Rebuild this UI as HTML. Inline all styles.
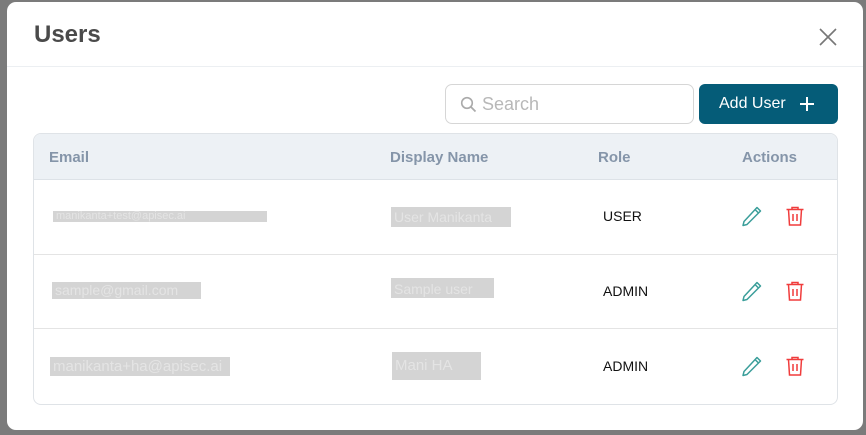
<!DOCTYPE html>
<html><head><style>
*{box-sizing:border-box;margin:0;padding:0}
body{width:866px;height:435px;background:#7b7b7b;font-family:"Liberation Sans",sans-serif;position:relative;overflow:hidden}
.m{position:absolute;left:7px;top:2px;width:856px;height:428px;background:#fff;border-radius:9px}
.t{position:absolute;left:34px;top:21px;font-size:24px;font-weight:bold;color:#4a4a4a}
.hd{position:absolute;left:7px;top:66px;width:856px;height:1px;background:#eceff2}
.s{position:absolute;left:445px;top:84px;width:249px;height:40px;border:1px solid #d6d6d6;border-radius:7px}
.s span{position:absolute;left:36px;top:9px;font-size:18px;color:#b8b8b8}
.b{position:absolute;left:699px;top:84px;width:139px;height:40px;background:#055c78;border-radius:6px;color:#fff;font-size:16px}
.b span{position:absolute;left:20px;top:11px}
.tb{position:absolute;left:33px;top:133px;width:805px;height:272px;border:1px solid #dfe3e7;border-radius:8px;overflow:hidden}
.th{position:absolute;left:0;top:0;width:805px;height:46px;background:#edf1f5;border-bottom:1px solid #dde2e7}
.th span{position:absolute;top:15px;font-size:15px;font-weight:bold;color:#8595a9}
.rl{position:absolute;left:0;width:805px;height:1px;background:#e4e4e4}
.r{position:absolute;background:#d4d4d4;color:#e4e4e4;font-size:14px;overflow:hidden;white-space:nowrap;padding-left:3px}
.role{position:absolute;left:569px;font-size:14px;color:#111}
svg{position:absolute}
</style></head><body>
<div class="m"></div>
<div class="t">Users</div>
<svg style="left:819px;top:28px" width="18" height="18" viewBox="0 0 18 18"><path d="M1 1L17 17M17 1L1 17" stroke="#777" stroke-width="1.6"/></svg>
<div class="hd"></div>
<div class="s"><svg style="left:14px;top:11px" width="17" height="17" viewBox="0 0 17 17"><circle cx="7" cy="7" r="5.3" fill="none" stroke="#aaa" stroke-width="1.6"/><path d="M11 11L15.5 15.5" stroke="#aaa" stroke-width="1.8"/></svg><span>Search</span></div>
<div class="b"><span>Add User</span><svg style="left:100px;top:12px" width="16" height="16" viewBox="0 0 16 16"><path d="M8 1V15M1 8H15" stroke="#fff" stroke-width="2"/></svg></div>
<div class="tb">
<div class="th"><span style="left:15px">Email</span><span style="left:356px">Display Name</span><span style="left:564px">Role</span><span style="left:708px">Actions</span></div>
<div class="rl" style="top:120px"></div>
<div class="rl" style="top:194px"></div>
<div class="r" style="left:19px;top:77px;width:214px;height:11px;font-size:11px;line-height:11px">manikanta+test@apisec.ai</div>
<div class="r" style="left:357px;top:73px;width:120px;height:20px;line-height:20px">User Manikanta</div>
<div class="r" style="left:18px;top:148px;width:149px;height:17px;line-height:17px">sample@gmail.com</div>
<div class="r" style="left:357px;top:144px;width:103px;height:20px;line-height:22px">Sample user</div>
<div class="r" style="left:16px;top:223px;width:180px;height:19px;line-height:19px;font-size:15px">manikanta+ha@apisec.ai</div>
<div class="r" style="left:358px;top:218px;width:89px;height:28px;line-height:28px;font-size:15px">Mani HA</div>
<div class="role" style="top:74px">USER</div>
<div class="role" style="top:149px">ADMIN</div>
<div class="role" style="top:224px">ADMIN</div>
</div>
<svg style="left:741px;top:205px" width="22" height="22" viewBox="0 0 22 22"><path d="M16 2.5L19.5 6L6 19.5L2 20.5L3 16.5Z M14 4.5L17.5 8" fill="none" stroke="#3a9e9a" stroke-width="1.5" stroke-linejoin="round"/></svg>
<svg style="left:784px;top:205px" width="22" height="22" viewBox="0 0 22 22"><path d="M2.5 4.5H19.5M8 4.5V2.5H14V4.5M4.5 4.5L5.5 20H16.5L17.5 4.5M9 9V16M13 9V16" fill="none" stroke="#f03c3c" stroke-width="1.5"/></svg>
<svg style="left:741px;top:280px" width="22" height="22" viewBox="0 0 22 22"><path d="M16 2.5L19.5 6L6 19.5L2 20.5L3 16.5Z M14 4.5L17.5 8" fill="none" stroke="#3a9e9a" stroke-width="1.5" stroke-linejoin="round"/></svg>
<svg style="left:784px;top:280px" width="22" height="22" viewBox="0 0 22 22"><path d="M2.5 4.5H19.5M8 4.5V2.5H14V4.5M4.5 4.5L5.5 20H16.5L17.5 4.5M9 9V16M13 9V16" fill="none" stroke="#f03c3c" stroke-width="1.5"/></svg>
<svg style="left:741px;top:355px" width="22" height="22" viewBox="0 0 22 22"><path d="M16 2.5L19.5 6L6 19.5L2 20.5L3 16.5Z M14 4.5L17.5 8" fill="none" stroke="#3a9e9a" stroke-width="1.5" stroke-linejoin="round"/></svg>
<svg style="left:784px;top:355px" width="22" height="22" viewBox="0 0 22 22"><path d="M2.5 4.5H19.5M8 4.5V2.5H14V4.5M4.5 4.5L5.5 20H16.5L17.5 4.5M9 9V16M13 9V16" fill="none" stroke="#f03c3c" stroke-width="1.5"/></svg>
</body></html>
